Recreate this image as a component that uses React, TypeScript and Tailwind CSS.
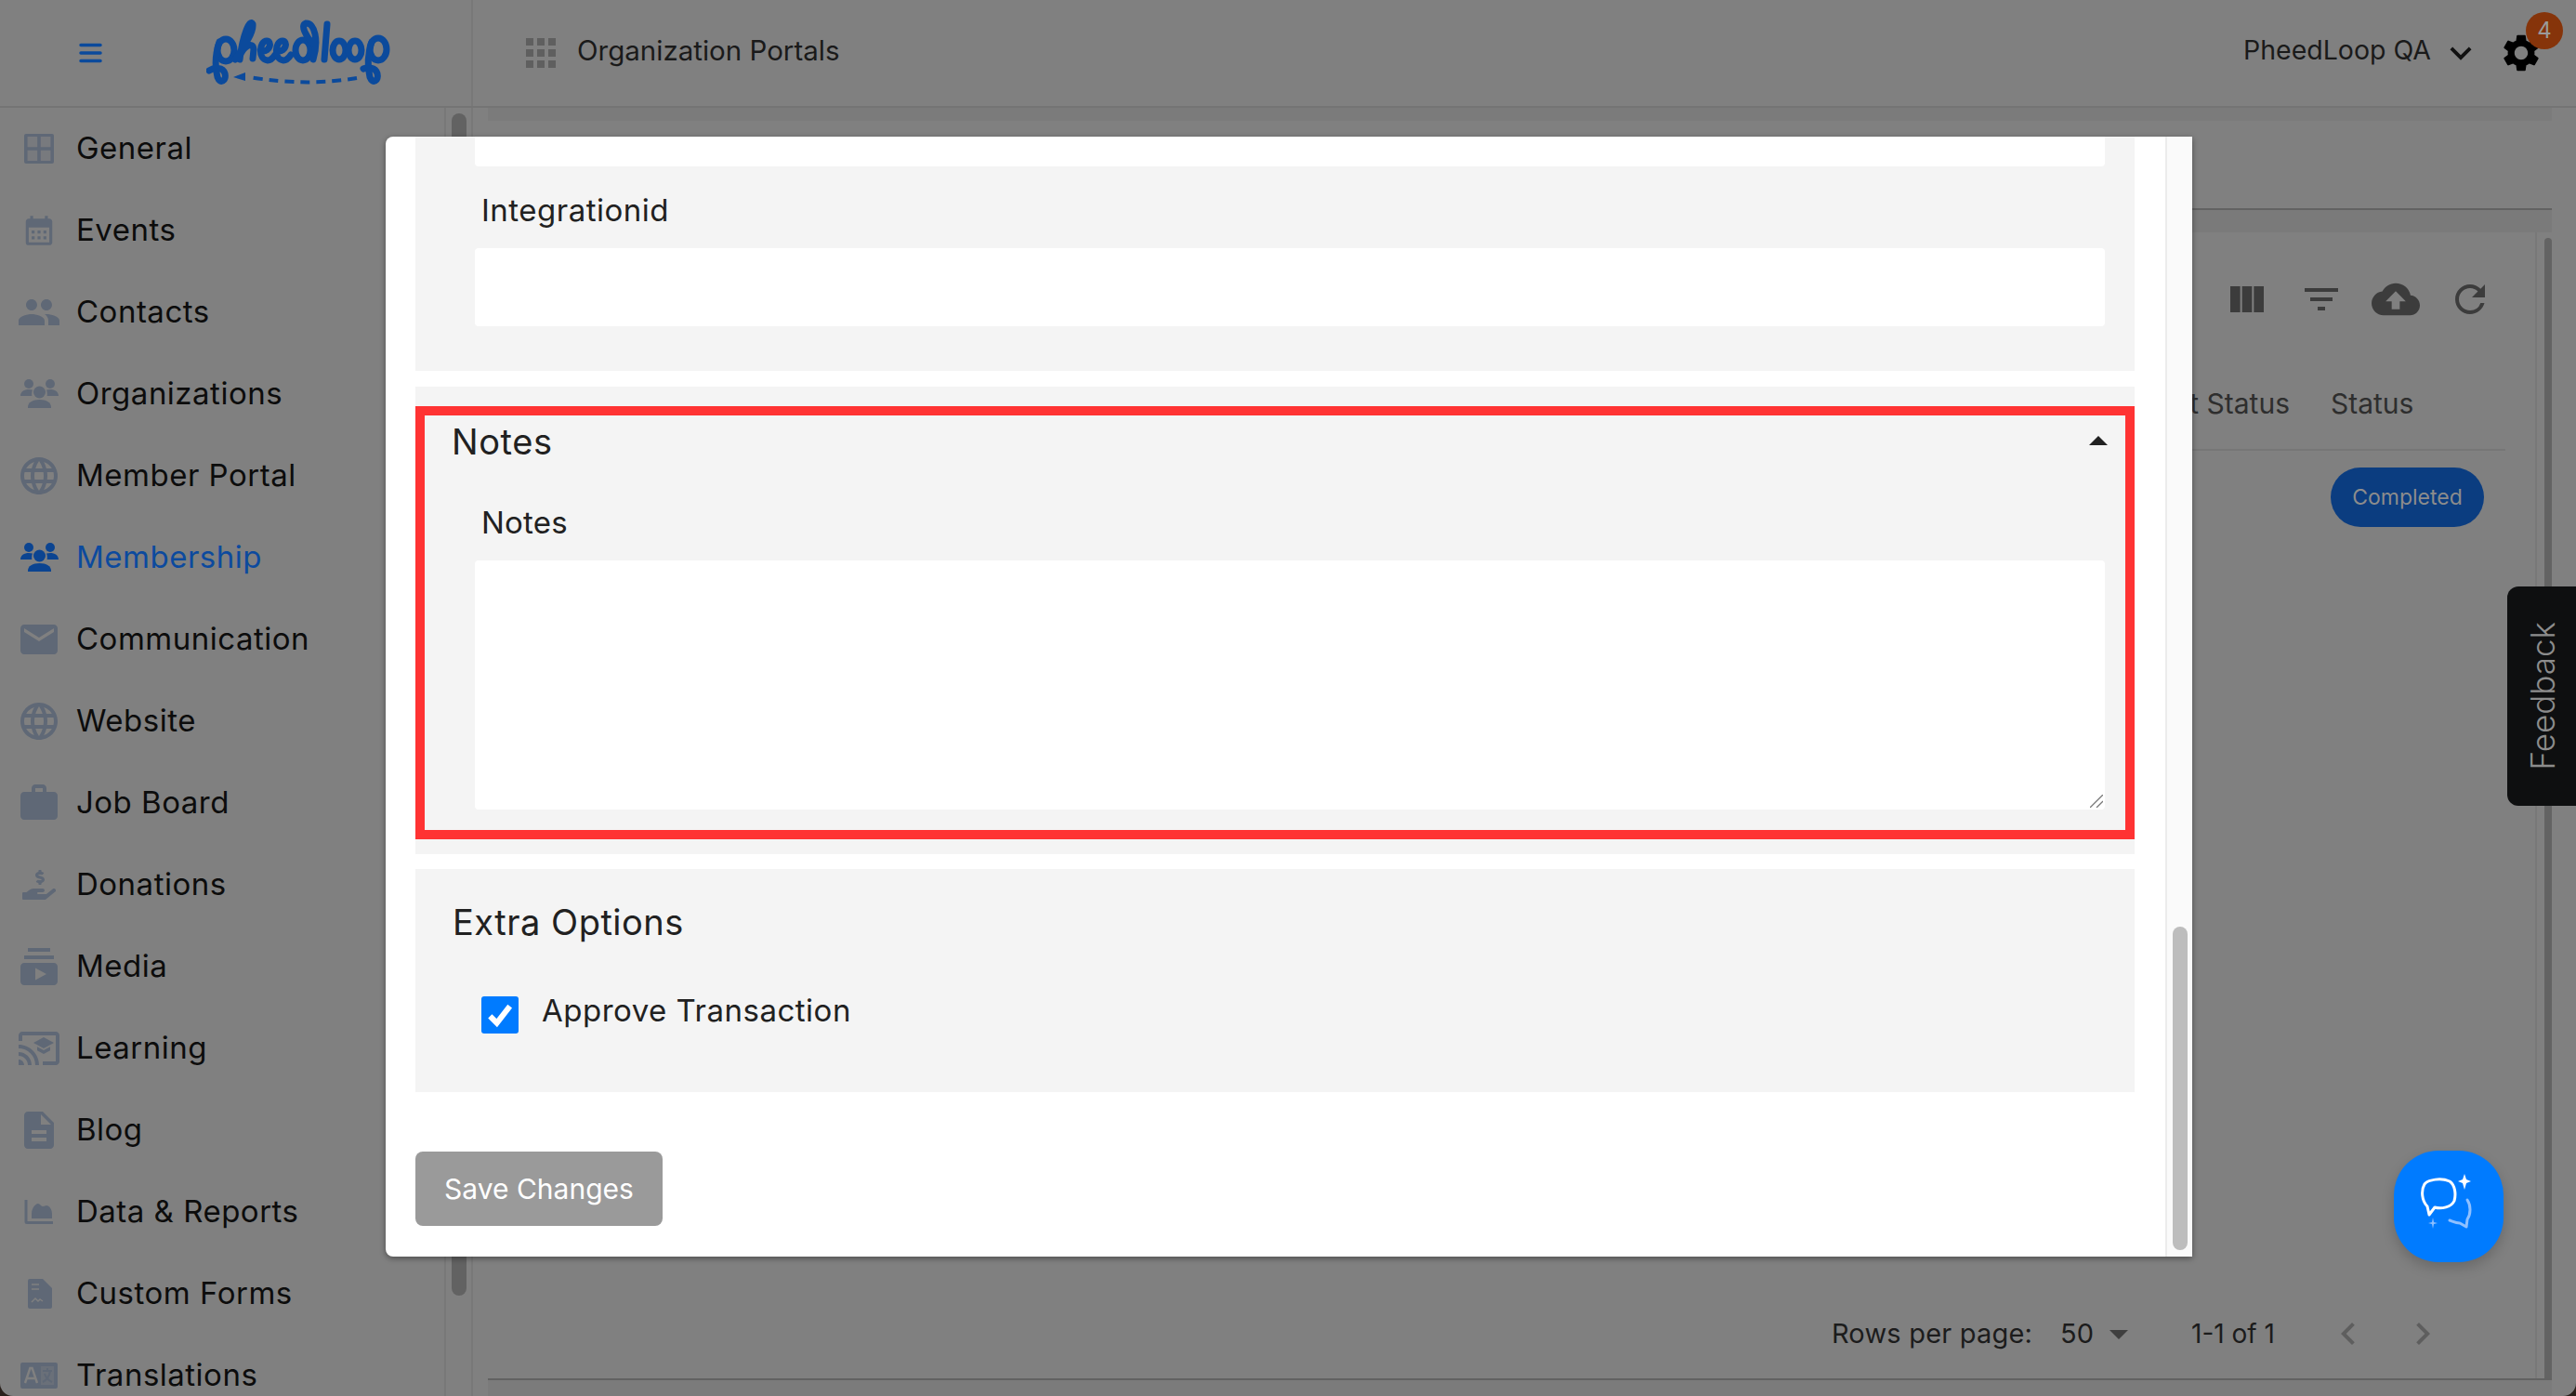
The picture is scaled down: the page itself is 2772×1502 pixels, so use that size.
import { ReactNode } from 'react';
import {
  MdApps,
  MdArrowDropDown,
  MdArrowDropUp,
  MdCalendarMonth,
  MdCastForEducation,
  MdChevronLeft,
  MdChevronRight,
  MdCloudUpload,
  MdDescription,
  MdEmail,
  MdFilterList,
  MdLanguage,
  MdPeople,
  MdRefresh,
  MdSettings,
  MdSubscriptions,
  MdViewColumn,
  MdWork,
  MdKeyboardArrowDown,
} from 'react-icons/md';
import { FaHandHoldingUsd } from 'react-icons/fa';

function WindowIcon({ className }: { className?: string }) {
  return (
    <svg viewBox="0 0 24 24" className={className} fill="currentColor">
      <path d="M5 4h14a1 1 0 0 1 1 1v14a1 1 0 0 1-1 1H5a1 1 0 0 1-1-1V5a1 1 0 0 1 1-1Zm.8 1.5v5.6h5.3V5.500Zm7.100 0v5.600h5.300V5.500Zm-7.100 7.400v5.600h5.300v-5.600Zm7.100 0v5.600h5.300v-5.600Z" fillRule="evenodd" />
      <path d="M5.800 5.500h12.400v13H5.800z" opacity="0.25" />
    </svg>
  );
}

function UsersIcon({ className }: { className?: string }) {
  return (
    <svg viewBox="0 0 48 48" className={className} fill="currentColor">
      <circle cx="13" cy="13" r="5" />
      <circle cx="36" cy="13" r="5" />
      <circle cx="24.500" cy="22" r="6.500" />
      <path d="M4 26c0-4.500 4-7 9-7 1.500 0 3 .2 4 .6-.5 1.200-.8 2.700-.8 4.400 0 .7 0 1.300.2 2Z" />
      <path d="M45 26c0-4.500-4-7-9-7-1.500 0-3 .2-4 .6.5 1.200.8 2.700.8 4.400 0 .7 0 1.300-.2 2Z" />
      <path d="M12 39v-1c0-5 5-8 12.500-8S37 33 37 38v1Z" />
    </svg>
  );
}

function ChartIcon({ className }: { className?: string }) {
  return (
    <svg viewBox="0 0 48 48" className={className} fill="currentColor">
      <path d="M8.500 11h3v23H39v3H11a2.500 2.500 0 0 1-2.500-2.500Z" />
      <path d="M16 31v-5c0-6 4-11 7-11 2 0 3 3 5 3s2.500-1 4-1c3 0 6 4 6 9v5Z" />
    </svg>
  );
}

function FormIcon({ className }: { className?: string }) {
  return (
    <svg viewBox="0 0 24 24" className={className} fill="currentColor">
      <path d="M7 4h7l5 5v10a1 1 0 0 1-1 1H7a1 1 0 0 1-1-1V5a1 1 0 0 1 1-1Z" />
      <path d="M8 7h4M8 9.500h4M8 16.500l2-2 1.500 1.500 1-1 1.500 1" fill="none" stroke="#808080" strokeWidth="0.7" />
    </svg>
  );
}

function TranslateIcon({ className }: { className?: string }) {
  return (
    <svg viewBox="0 0 24 24" className={className} fill="currentColor">
      <path d="M3 5h18a1 1 0 0 1 1 1v12a1 1 0 0 1-1 1H3a1 1 0 0 1-1-1V6a1 1 0 0 1 1-1Z" />
      <path d="M4.500 16 7.200 8h1.100l2.700 8M5.500 13.500h4.500" fill="none" stroke="#808080" strokeWidth="1.200" />
      <path d="M13 7h7v10h-7z" fill="#808080" opacity="0.35" />
      <path d="M14 9.500h5M16.500 8v1.500M18 9.500c-.5 3-2 5-4 6M15 11c.5 2 2 3.500 4 4.500" fill="none" stroke="currentColor" strokeWidth="1" />
    </svg>
  );
}

const NAV: { label: string; icon: ReactNode; active?: boolean }[] = [
  { label: 'General', icon: <WindowIcon className="h-12 w-12" /> },
  { label: 'Events', icon: <MdCalendarMonth className="h-[38px] w-[38px]" /> },
  { label: 'Contacts', icon: <MdPeople className="h-12 w-12" /> },
  { label: 'Organizations', icon: <UsersIcon className="h-12 w-12" /> },
  { label: 'Member Portal', icon: <MdLanguage className="h-12 w-12" /> },
  { label: 'Membership', icon: <UsersIcon className="h-12 w-12" />, active: true },
  { label: 'Communication', icon: <MdEmail className="h-12 w-12" /> },
  { label: 'Website', icon: <MdLanguage className="h-12 w-12" /> },
  { label: 'Job Board', icon: <MdWork className="h-12 w-12" /> },
  { label: 'Donations', icon: <FaHandHoldingUsd className="h-9 w-9" /> },
  { label: 'Media', icon: <MdSubscriptions className="h-12 w-12" /> },
  { label: 'Learning', icon: <MdCastForEducation className="h-12 w-12" /> },
  { label: 'Blog', icon: <MdDescription className="h-12 w-12" /> },
  { label: 'Data & Reports', icon: <ChartIcon className="h-12 w-12" /> },
  { label: 'Custom Forms', icon: <FormIcon className="h-12 w-12" /> },
  { label: 'Translations', icon: <TranslateIcon className="h-12 w-12" /> },
];

function Logo() {
  return (
    <svg viewBox="222 20 198 72" className="h-[72px] w-[198px]" fill="none" stroke="#0b4a9c" strokeWidth="7" strokeLinecap="round">
      <ellipse cx="243" cy="53" rx="9" ry="12" />
      <path d="M236 44c-4 12-5 26-2 38 3 8 10 4 8-4-2-7-11-7-17-3" />
      <path d="M253 63c8-12 20-28 19-38-3-7-11 12-14 38M258 60c3-10 14-18 15-8l-1 10" />
      <path d="M282 54c9 1 11-11 5-11-8 0-10 20 1 21 3 0 6-3 8-6" />
      <path d="M299 54c9 1 11-11 5-11-8 0-10 20 1 21 3 0 6-3 8-6" />
      <ellipse cx="326" cy="53" rx="8" ry="11" />
      <path d="M337 63c6-20 2-40-8-39-6 2 0 14 8 22" />
      <path d="M352 25l-3 38" />
      <ellipse cx="365" cy="53" rx="7" ry="10" />
      <ellipse cx="382" cy="53" rx="7" ry="10" />
      <ellipse cx="407" cy="52" rx="9" ry="12" />
      <path d="M400 44c-4 12-5 26-2 38 3 8 10 4 8-4-2-7-11-7-15-5" />
      <path d="M384 83c-36 6-72 6-116-1" strokeWidth="4" strokeDasharray="10 7" strokeLinecap="butt" />
      <path d="M251 82l13-5v9z" fill="#0b4a9c" stroke="none" />
    </svg>
  );
}

function ChatIcon() {
  return (
    <svg viewBox="0 0 70 70" className="h-[70px] w-[70px]" fill="none" strokeLinecap="round" strokeLinejoin="round">
      <path d="M12 35c-6-6-7-17-3-24 4-5 18-7 27-3 6 4 7 14 5 21-3 7-14 9-21 7l-6 8Z" stroke="#fff" strokeWidth="3" />
      <path d="M55 28c4 6 4 15 0 21l-1 8-7-4c-4 0-8-2-11-3" stroke="#8fc0ff" strokeWidth="3" />
      <path d="M52 0l2 6 5 2-5 2-2 7-2-7-5-2 5-2Z" fill="#fff" />
      <path d="M18 47l1 5 4 1-4 1-1 5-1-5-4-1 4-1Z" fill="#8fc0ff" />
    </svg>
  );
}

function Sidebar() {
  return (
    <div className="flex w-[525px] shrink-0">
      <nav className="w-[478px] shrink-0 overflow-hidden">
        {NAV.map((item) => (
          <div key={item.label} className="flex h-[88px] items-center gap-4 pl-[18px]">
            <span className={`flex h-12 w-12 items-center justify-center ${item.active ? 'text-[#0b4491]' : 'text-[#5f6876]'}`}>
              {item.icon}
            </span>
            <span className={`whitespace-nowrap text-[33px] tracking-[0.5px] ${item.active ? 'text-[#0c4a9e]' : 'text-[#0c0c0c]'}`}>
              {item.label}
            </span>
          </div>
        ))}
      </nav>
      <div className="w-[31px] shrink-0 border-x-2 border-[#787878] pl-[6px] pt-[6px]">
        <div className="h-[1272px] w-4 rounded-lg bg-[#626262]" />
      </div>
    </div>
  );
}

function DataTable() {
  return (
    <div className="flex min-w-0 flex-1 flex-col">
      <div className="h-[14px] bg-[#7b7b7b]" />
      <div className="h-[96px] border-b-2 border-[#626262]" />
      <div className="h-[24px] bg-[#7a7a7a]" />
      <div className="flex min-h-0 flex-1">
        <div className="flex min-w-0 flex-1 flex-col border-r-2 border-[#787878]">
          <div className="flex h-[143px] items-center justify-end gap-8 pr-[46px] text-[#3c3c3c]">
            <MdViewColumn className="h-12 w-12" />
            <MdFilterList className="h-12 w-12" />
            <MdCloudUpload className="-mx-[2px] h-[52px] w-[52px]" />
            <MdRefresh className="h-12 w-12" />
          </div>
          <div className="mr-[32px] flex h-[92px] items-center justify-end border-b-2 border-[#767676] pb-[7px] text-[30px] text-[#2e2e2e]">
            <span className="mr-[44px]">Payment Status</span>
            <span className="w-[188px]">Status</span>
          </div>
          <div className="mr-[32px] flex justify-end pt-[18px]">
            <div className="w-[188px]">
              <div className="flex h-16 w-[165px] items-center justify-center rounded-full bg-[#0b3d80] text-[23px] text-[#8c8c8c]">
                Completed
              </div>
            </div>
          </div>
          <div className="mt-auto flex h-[94px] items-center justify-end pb-[2px] pr-[97px] text-[29px] text-[#1c1c1c]">
            <span className="tracking-[0.2px]">Rows per page:</span>
            <span className="ml-[30px]">50</span>
            <MdArrowDropDown className="ml-[3px] h-12 w-12 text-[#3f3f3f]" />
            <span className="ml-[54px] text-[28px]">1-1 of 1</span>
            <MdChevronLeft className="ml-[55px] h-12 w-12 text-[#5e5e5e]" />
            <MdChevronRight className="ml-[32px] h-12 w-12 text-[#5e5e5e]" />
          </div>
        </div>
        <div className="w-4 shrink-0 pl-2 pt-[6px]">
          <div className="h-full rounded-t-lg bg-[#636363]" />
        </div>
      </div>
      <div className="h-[19px] border-t-2 border-[#626262] bg-[#7b7b7b]" />
    </div>
  );
}

function EditModal() {
  return (
    <div className="absolute left-[415px] top-[147px] flex h-[1205px] w-[1944px] overflow-hidden rounded-l-lg bg-white text-[#212121] shadow-[0_2px_6px_rgba(0,0,0,0.4)]">
      <div className="flex min-w-0 flex-1 flex-col pl-8 pr-[33px]">
        <section className="h-[252px] shrink-0 bg-[#f4f4f4] pl-16 pr-8">
          <div className="h-8 rounded-b bg-white" />
          <div className="flex h-[88px] items-center pl-[7px] pt-[7px] text-[33px] tracking-[0.5px]">Integrationid</div>
          <div className="h-[84px] rounded bg-white" />
        </section>

        <section className="mt-[17px] h-[503px] shrink-0 bg-[#f4f4f4] pt-[21px]">
          <div className="h-[466px] border-[10px] border-[#ff3333]">
            <div className="flex h-[56px] items-center justify-between pl-[29px] pr-[5px]">
              <span className="text-[38px] tracking-[0.6px]">Notes</span>
              <MdArrowDropUp className="h-12 w-12" />
            </div>
            <div className="flex h-[100px] items-center pl-[61px] pt-5 text-[33px] tracking-[0.2px]">Notes</div>
            <div className="pl-[54px] pr-[22px]">
              <div className="relative">
                <textarea className="block h-[268px] w-full resize-none rounded bg-white outline-none" />
                <svg viewBox="0 0 14 14" className="absolute bottom-[2px] right-[2px] h-[14px] w-[14px]" stroke="#777" strokeWidth="1.300" fill="none">
                  <path d="M0 14 14 0M7 14l7-7" />
                </svg>
              </div>
            </div>
          </div>
        </section>

        <section className="mt-4 h-[240px] shrink-0 bg-[#f4f4f4] pl-[40px]">
          <div className="flex h-[112px] items-center pt-[3px] text-[38px] tracking-[0.5px]">Extra Options</div>
          <div className="flex items-start pl-[31px] pt-[25px]">
            <span className="flex h-10 w-10 items-center justify-center rounded-[3px] bg-[#007bff]">
              <svg viewBox="0 0 24 24" className="h-8 w-8" fill="none" stroke="#fff" strokeWidth="4.500">
                <path d="M4 13l5.500 5.500L20 5" />
              </svg>
            </span>
            <span className="-mt-[9px] ml-[25px] text-[33px] tracking-[0.5px]">Approve Transaction</span>
          </div>
        </section>

        <button className="mt-16 flex h-20 w-[266px] shrink-0 items-center justify-center rounded-lg bg-[#9a9a9a] text-[30px] text-white">
          Save Changes
        </button>
      </div>
      <div className="flex w-[29px] shrink-0 flex-col justify-end border-l-2 border-[#ececec] bg-[#fafafa] pb-[7px] pl-[6px]">
        <div className="h-[348px] w-4 rounded-lg bg-[#bdbdbd]" />
      </div>
    </div>
  );
}

export default function App() {
  return (
    <div className="h-[1502px] w-full overflow-hidden bg-[#2a211c]">
      <div
        className="relative flex h-full flex-col overflow-hidden rounded-b-[14px] bg-[#808080] text-[#1a1a1a]"
        style={{ fontFamily: 'Inter, "Noto Sans", "Liberation Sans", sans-serif' }}
      >
        <header className="flex h-[116px] shrink-0 items-center border-b-2 border-[#747474]">
          <div className="flex h-full w-[509px] shrink-0 items-center border-r-2 border-[#787878] pl-[85px]">
            <svg viewBox="0 0 25 22" className="h-[22px] w-[25px]" stroke="#0b4a9c" strokeWidth="3.500" strokeLinecap="round">
              <path d="M2 2.500h21M2 11h21M2 19.500h21" />
            </svg>
            <span className="ml-[112px]">
              <Logo />
            </span>
          </div>
          <MdApps className="ml-[49px] h-12 w-12 text-[#5f5f5f]" />
          <span className="mb-[6px] ml-[15px] text-[29.500px]">Organization Portals</span>
          <span className="mb-[6px] ml-auto text-[28.500px]">PheedLoop QA</span>
          <MdKeyboardArrowDown className="ml-[9px] h-[46px] w-[46px] text-[#111]" />
          <span className="relative ml-[18px] mr-[35px]">
            <MdSettings className="h-12 w-12 text-black" />
            <span className="absolute -right-[21px] -top-[20px] flex h-10 w-10 items-center justify-center rounded-full bg-[#86340a] text-[24px] text-[#9a9a9a]">
              4
            </span>
          </span>
        </header>

        <div className="flex min-h-0 flex-1 pr-[26px]">
          <Sidebar />
          <DataTable />
        </div>

        <EditModal />

        <div className="absolute right-0 top-[631px] flex h-[236px] w-[74px] items-center justify-center rounded-l-xl bg-[#0e0f10] pl-[3px]">
          <span className="rotate-180 text-[35px] font-light text-[#8c8c8c] [writing-mode:vertical-rl]">Feedback</span>
        </div>

        <div className="absolute left-[2576px] top-[1238px] flex h-[120px] w-[118px] items-center justify-center rounded-[48px] bg-[#007bff] shadow-[0_6px_14px_rgba(0,0,0,0.18)]">
          <ChatIcon />
        </div>
      </div>
    </div>
  );
}
